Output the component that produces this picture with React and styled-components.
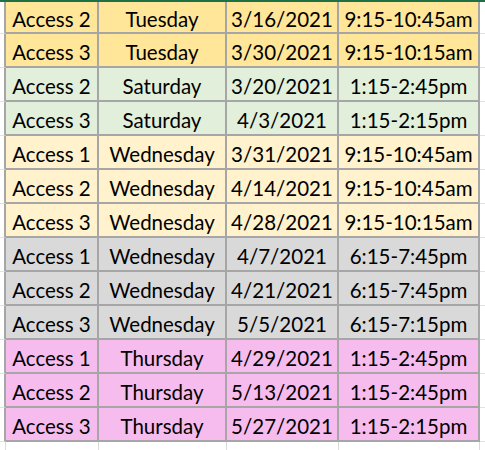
import React from "react";
import styled, { createGlobalStyle } from "styled-components";

const GlobalStyle = createGlobalStyle`
  html, body {
    margin: 0;
    padding: 0;
    background: #ffffff;
  }
  body {
    font-family: Lato, "Liberation Sans", sans-serif;
  }
`;

const fills = {
  gold: "#ffe699",
  green: "#e2efda",
  cream: "#fff2cc",
  gray: "#d9d9d9",
  pink: "#f7bcee",
};

const rows = [
  ["Access 2", "Tuesday", "3/16/2021", "9:15-10:45am", "gold"],
  ["Access 3", "Tuesday", "3/30/2021", "9:15-10:15am", "gold"],
  ["Access 2", "Saturday", "3/20/2021", "1:15-2:45pm", "green"],
  ["Access 3", "Saturday", "4/3/2021", "1:15-2:15pm", "green"],
  ["Access 1", "Wednesday", "3/31/2021", "9:15-10:45am", "cream"],
  ["Access 2", "Wednesday", "4/14/2021", "9:15-10:45am", "cream"],
  ["Access 3", "Wednesday", "4/28/2021", "9:15-10:15am", "cream"],
  ["Access 1", "Wednesday", "4/7/2021", "6:15-7:45pm", "gray"],
  ["Access 2", "Wednesday", "4/21/2021", "6:15-7:45pm", "gray"],
  ["Access 3", "Wednesday", "5/5/2021", "6:15-7:15pm", "gray"],
  ["Access 1", "Thursday", "4/29/2021", "1:15-2:45pm", "pink"],
  ["Access 2", "Thursday", "5/13/2021", "1:15-2:45pm", "pink"],
  ["Access 3", "Thursday", "5/27/2021", "1:15-2:15pm", "pink"],
];

const Sheet = styled.div`
  display: grid;
  grid-template-columns: 6px 93px 128px 112px 141px 1fr;
  grid-template-rows: 32px repeat(12, 34px) 1fr;
  height: 450px;
  border-top: 2px solid #1e7145;
  box-sizing: border-box;
  overflow: hidden;
`;

const Gutter = styled.div`
  box-sizing: border-box;
  border-right: 2px solid ${({ $inside }) => ($inside ? "#a6a6a6" : "#dadada")};
  border-bottom: 1px solid #e1e1e1;
`;

const Cell = styled.div`
  box-sizing: border-box;
  display: flex;
  align-items: center;
  justify-content: center;
  padding-top: 3px;
  background: ${({ $fill }) => fills[$fill]};
  border-right: 2px solid #a6a6a6;
  border-bottom: 2px solid #a6a6a6;
  font-size: 20.5px;
  color: #000000;
  white-space: nowrap;
`;

const Tail = styled.div`
  box-sizing: border-box;
  border-bottom: 1px solid #e1e1e1;
`;

const Blank = styled.div`
  box-sizing: border-box;
  border-right: 1px solid ${({ $line }) => ($line ? "#dadada" : "transparent")};
`;

export default function App() {
  return (
    <>
      <GlobalStyle />
      <Sheet>
        {rows.map(([access, day, date, time, fill], i) => (
          <React.Fragment key={i}>
            <Gutter $inside />
            <Cell $fill={fill}>{access}</Cell>
            <Cell $fill={fill}>{day}</Cell>
            <Cell $fill={fill}>{date}</Cell>
            <Cell $fill={fill}>{time}</Cell>
            <Tail />
          </React.Fragment>
        ))}
        <Blank $line />
        <Blank $line />
        <Blank $line />
        <Blank $line />
        <Blank $line />
        <Blank />
      </Sheet>
    </>
  );
}
